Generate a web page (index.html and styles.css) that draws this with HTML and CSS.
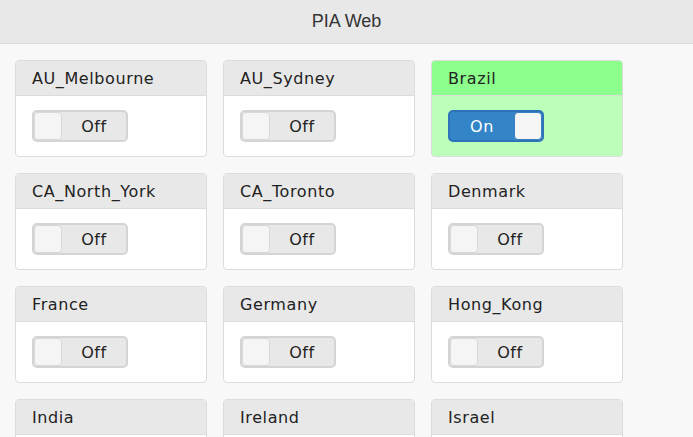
FILE: index.html
```html
<!DOCTYPE html>
<html>
<head>
<meta charset="utf-8">
<link rel="stylesheet" href="styles.css">
</head>
<body>
<header class="topbar">PIA Web</header>
<main class="grid">
  <div class="card"><div class="card-head">AU_Melbourne</div><div class="card-body"><div class="toggle"><span class="knob"></span><span class="label">Off</span></div></div></div>
  <div class="card"><div class="card-head">AU_Sydney</div><div class="card-body"><div class="toggle"><span class="knob"></span><span class="label">Off</span></div></div></div>
  <div class="card card-on"><div class="card-head">Brazil</div><div class="card-body"><div class="toggle toggle-on"><span class="label">On</span><span class="knob"></span></div></div></div>
  <div class="card"><div class="card-head">CA_North_York</div><div class="card-body"><div class="toggle"><span class="knob"></span><span class="label">Off</span></div></div></div>
  <div class="card"><div class="card-head">CA_Toronto</div><div class="card-body"><div class="toggle"><span class="knob"></span><span class="label">Off</span></div></div></div>
  <div class="card"><div class="card-head">Denmark</div><div class="card-body"><div class="toggle"><span class="knob"></span><span class="label">Off</span></div></div></div>
  <div class="card"><div class="card-head">France</div><div class="card-body"><div class="toggle"><span class="knob"></span><span class="label">Off</span></div></div></div>
  <div class="card"><div class="card-head">Germany</div><div class="card-body"><div class="toggle"><span class="knob"></span><span class="label">Off</span></div></div></div>
  <div class="card"><div class="card-head">Hong_Kong</div><div class="card-body"><div class="toggle"><span class="knob"></span><span class="label">Off</span></div></div></div>
  <div class="card"><div class="card-head">India</div><div class="card-body"><div class="toggle"><span class="knob"></span><span class="label">Off</span></div></div></div>
  <div class="card"><div class="card-head">Ireland</div><div class="card-body"><div class="toggle"><span class="knob"></span><span class="label">Off</span></div></div></div>
  <div class="card"><div class="card-head">Israel</div><div class="card-body"><div class="toggle"><span class="knob"></span><span class="label">Off</span></div></div></div>
</main>
</body>
</html>
```
FILE: styles.css
```css
html, body {
  margin: 0;
  padding: 0;
  background: #f8f8f8;
  overflow: hidden;
  height: 437px;
}
.topbar {
  height: 43px;
  line-height: 42px;
  background: #e8e8e8;
  border-bottom: 1px solid #dadada;
  text-align: center;
  font-family: "Liberation Sans", Arial, sans-serif;
  font-size: 18px;
  color: #333;
}
.grid {
  display: grid;
  grid-template-columns: repeat(3, 192px);
  column-gap: 16px;
  row-gap: 16px;
  padding: 16px 15px;
  font-family: "DejaVu Sans", sans-serif;
}
.card {
  border: 1px solid #dcdcdc;
  border-radius: 4px;
  background: #fff;
  overflow: hidden;
  height: 95px;
  box-sizing: content-box;
}
.card-head {
  height: 34px;
  line-height: 35px;
  background: #e8e8e8;
  border-bottom: 1px solid #dcdcdc;
  padding-left: 16px;
  font-size: 16px;
  letter-spacing: 0.6px;
  color: #222;
}
.card-body {
  padding: 14px 16px;
}
.card-on .card-head {
  background: #8cff8c;
}
.card-on {
  background: #bbffbb;
}
.toggle {
  width: 92px;
  height: 28px;
  border: 2px solid #d4d4d4;
  border-radius: 5px;
  background: #e8e8e8;
  display: flex;
  align-items: center;
}
.knob {
  width: 26px;
  height: 26px;
  background: #f5f5f5;
  border: 1px solid #d8d8d8;
  border-radius: 4px;
  flex: none;
}
.label {
  flex: 1;
  text-align: center;
  font-size: 16px;
  letter-spacing: 0.6px;
  color: #222;
}
.toggle-on {
  background: #3385c8;
  border-color: #2e72b8;
}
.toggle-on .label {
  color: #fff;
}
.toggle-on .knob {
  border-color: #3a7fc0;
}
```
